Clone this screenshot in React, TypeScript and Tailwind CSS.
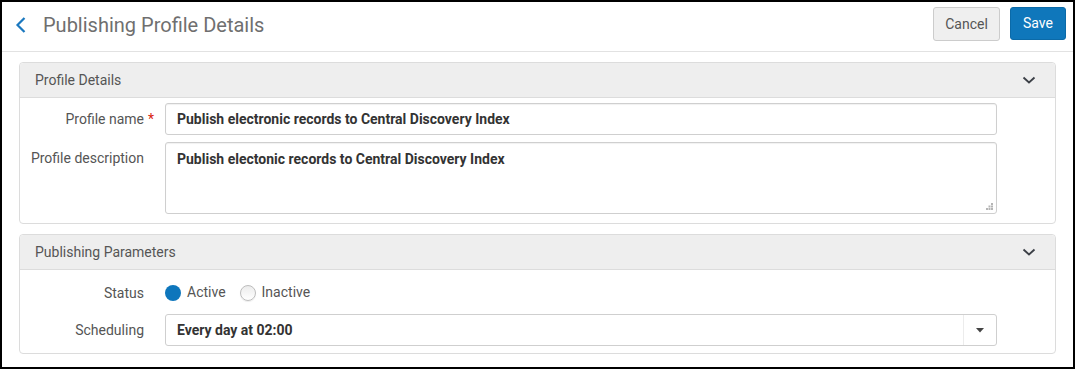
import React from "react";

const ChevronDown = () => (
  <svg width="14" height="8" viewBox="0 0 14 8" fill="none" stroke="#3b3f46" strokeWidth="1.8">
    <polyline points="1.5 1.5 7 6.5 12.5 1.5" />
  </svg>
);

function Panel({ title, children }: { title: string; children: React.ReactNode }) {
  return (
    <div className="rounded-[4px] border border-[#dcdcdc] bg-white">
      <div className="flex h-[35px] items-center justify-between rounded-t-[4px] border-b border-[#dcdcdc] bg-[#eeeeee] pl-[15px] pr-[19px]">
        <span className="text-[14px] text-[#555555]">{title}</span>
        <ChevronDown />
      </div>
      {children}
    </div>
  );
}

function Label({ children }: { children: React.ReactNode }) {
  return <div className="relative text-right text-[14px] leading-[20px] text-[#555555]">{children}</div>;
}

export default function App() {
  return (
    <div
      className="h-[369px] w-[1075px] border-2 border-black bg-white"
      style={{ fontFamily: "Roboto, 'Liberation Sans', sans-serif" }}
    >
      {/* header */}
      <div className="flex h-[50px] items-start justify-between border-b border-[#e2e2e2] pr-[7px]">
        <div className="flex items-center pl-[12px] pt-[10px]">
          <svg width="14" height="20" viewBox="0 0 14 20" fill="none" stroke="#1b78bf" strokeWidth="2.2">
            <polyline points="10.5 3 3.5 10 10.5 17" />
          </svg>
          <h1 className="ml-[15px] text-[20px] leading-[26px] text-[#6f6f6f]">Publishing Profile Details</h1>
        </div>
        <div className="flex gap-[10px] pt-[5px]">
          <button className="h-[34px] w-[67px] rounded-[3px] border border-[#cccccc] bg-[#efefef] text-[14px] text-[#555555]">
            Cancel
          </button>
          <button className="h-[33px] w-[56px] rounded-[3px] border border-[#0b6aa8] bg-[#0f77bb] text-[14px] text-white">
            Save
          </button>
        </div>
      </div>

      <div className="flex flex-col gap-[10px] px-[17px] pt-[10px]">
        <Panel title="Profile Details">
          <div className="grid grid-cols-[124px_1fr] gap-x-[21px] gap-y-[7px] pb-[9px] pr-[58px] pt-[5px]">
            <div className="flex items-center justify-end">
              <Label>
                Profile name
                <span className="absolute -right-[10px] top-0 text-[#d9230f]">*</span>
              </Label>
            </div>
            <input
              readOnly
              value="Publish electronic records to Central Discovery Index"
              className="h-[32px] rounded-[3px] border border-[#cfcfcf] px-[11px] text-[14px] font-bold text-[#333333] shadow-[inset_0_1px_1px_rgba(0,0,0,0.06)] outline-none"
              style={{ fontFamily: "Roboto, 'Liberation Sans', sans-serif" }}
            />
            <div className="pt-[6px]">
              <Label>Profile description</Label>
            </div>
            <div className="relative">
              <textarea
                readOnly
                value="Publish electonic records to Central Discovery Index"
                className="block h-[72px] w-full resize-none rounded-[3px] border border-[#cfcfcf] px-[11px] pt-[6px] text-[14px] font-bold leading-[20px] text-[#333333] shadow-[inset_0_1px_1px_rgba(0,0,0,0.06)] outline-none"
                style={{ fontFamily: "Roboto, 'Liberation Sans', sans-serif" }}
              />
              <svg className="absolute bottom-[4px] right-[4px]" width="7" height="7" viewBox="0 0 7 7" fill="#b5b5b5">
                <rect x="5" y="0" width="2" height="2" />
                <rect x="2.5" y="2.5" width="2" height="2" />
                <rect x="5" y="2.5" width="2" height="2" />
                <rect x="0" y="5" width="2" height="2" />
                <rect x="2.5" y="5" width="2" height="2" />
                <rect x="5" y="5" width="2" height="2" />
              </svg>
            </div>
          </div>
        </Panel>

        <Panel title="Publishing Parameters">
          <div className="grid grid-cols-[124px_1fr] gap-x-[21px] gap-y-[11px] pb-[7px] pr-[58px] pt-[12px]">
            <div className="flex items-center justify-end">
              <Label>Status</Label>
            </div>
            <div className="flex items-center text-[14px] text-[#555555]">
              <span className="h-[16px] w-[16px] rounded-full bg-[#0e76bc]" />
              <span className="ml-[6px]">Active</span>
              <span className="ml-[14px] h-[16px] w-[16px] rounded-full border border-[#bdbdbd] bg-gradient-to-b from-[#ececec] to-white shadow-[0_1px_1px_rgba(0,0,0,0.08)]" />
              <span className="ml-[6px]">Inactive</span>
            </div>
            <div className="flex items-center justify-end">
              <Label>Scheduling</Label>
            </div>
            <div className="flex h-[32px] items-stretch rounded-[3px] border border-[#cfcfcf]">
              <div className="flex flex-1 items-center px-[11px] text-[14px] font-bold text-[#333333]">
                Every day at 02:00
              </div>
              <div className="flex w-[33px] items-center justify-center border-l border-[#ececec]">
                <svg width="8" height="5" viewBox="0 0 8 5" fill="#444444">
                  <polygon points="0 0 8 0 4 4.5" />
                </svg>
              </div>
            </div>
          </div>
        </Panel>
      </div>
    </div>
  );
}
